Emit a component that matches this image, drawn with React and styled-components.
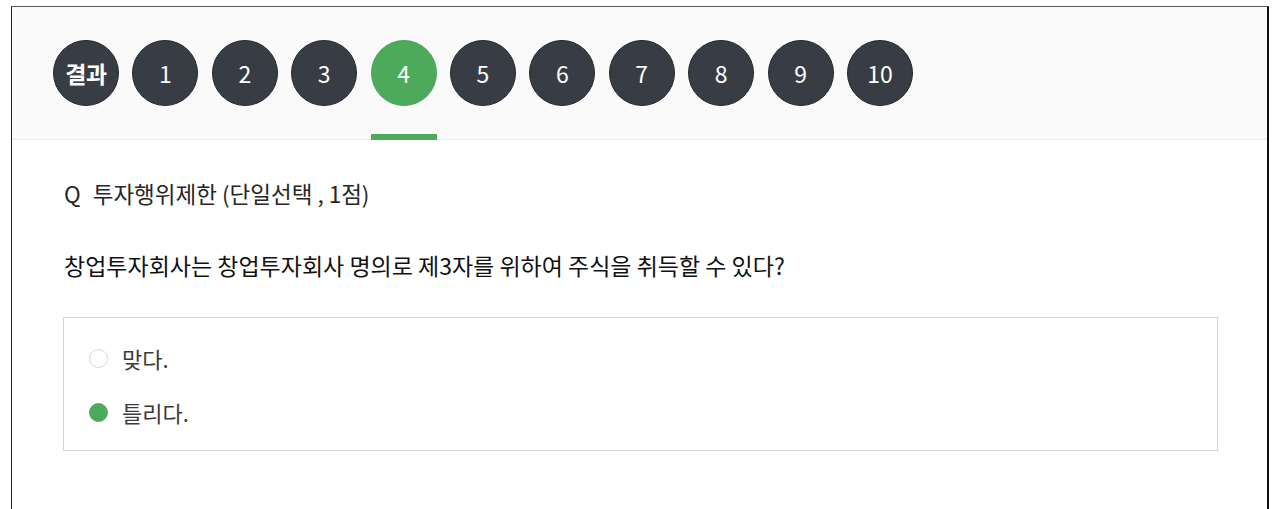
import React from "react";
import styled, { createGlobalStyle } from "styled-components";

const Global = createGlobalStyle`
  html, body { margin: 0; padding: 0; background: #ffffff; }
  body { font-family: "Noto Sans CJK KR", "Noto Sans", sans-serif; }
`;

const Page = styled.div`
  padding: 6px 11px 0 11px;
  height: 509px;
  box-sizing: border-box;
`;

const Frame = styled.div`
  border-top: 1px solid #555a60;
  border-left: 1px solid #222;
  border-right: 2px solid #111;
  height: 503px;
  box-sizing: border-box;
  overflow: hidden;
`;

const Header = styled.div`
  background: #fafafa;
  border-bottom: 1px solid #ececec;
  height: 133px;
  padding: 33px 0 0 41px;
  box-sizing: border-box;
  display: flex;
  gap: 13.4px;
  align-items: flex-start;
`;

const Tab = styled.div`
  position: relative;
  width: 66px;
  height: 100px;
  flex: 0 0 auto;
`;

const Circle = styled.div`
  width: 66px;
  height: 66px;
  border-radius: 50%;
  box-sizing: border-box;
  border: 1px solid ${(p) => (p.$active ? "#47a757" : "#25292e")};
  background: ${(p) => (p.$active ? "#4caa5a" : "#383d45")};
  color: #fff;
  display: flex;
  align-items: center;
  justify-content: center;
  font-size: 23px;
  font-weight: ${(p) => (p.$label ? 700 : 400)};
  font-family: "Noto Sans CJK KR", "Noto Sans", sans-serif;
  letter-spacing: ${(p) => (p.$label ? "-0.5px" : "0")};
`;

const Underline = styled.div`
  position: absolute;
  left: 0;
  bottom: 0;
  width: 66px;
  height: 6px;
  background: #4caa5a;
`;

const Body = styled.div`
  padding: 40px 49px 0 51px;
`;

const Title = styled.div`
  font-size: 22.5px;
  color: #262626;
  line-height: 26px;
  display: flex;
  gap: 12px;
  padding-left: 1px;
`;

const Question = styled.div`
  margin-top: 44px;
  padding-left: 1px;
  font-size: 23px;
  color: #111;
  line-height: 30px;
`;

const Options = styled.div`
  margin-top: 37px;
  border: 1px solid #d4d4d4;
  height: 134px;
  box-sizing: border-box;
  padding: 20px 25px 0;
  display: flex;
  flex-direction: column;
  gap: 14px;
`;

const Option = styled.label`
  display: flex;
  align-items: center;
  gap: 14px;
  height: 40px;
  font-size: 22px;
  color: #3a3a3a;
`;

const Radio = styled.span`
  width: 19px;
  height: 19px;
  border-radius: 50%;
  box-sizing: border-box;
  border: 1px solid ${(p) => (p.$checked ? "#4caa5a" : "#d8d8d8")};
  background: ${(p) => (p.$checked ? "#4caa5a" : "#fff")};
  flex: 0 0 auto;
`;

const tabs = ["결과", "1", "2", "3", "4", "5", "6", "7", "8", "9", "10"];

export default function App() {
  return (
    <>
      <Global />
      <Page>
        <Frame>
          <Header>
            {tabs.map((t, i) => (
              <Tab key={t}>
                <Circle $active={t === "4"} $label={i === 0}>
                  {t}
                </Circle>
                {t === "4" && <Underline />}
              </Tab>
            ))}
          </Header>
          <Body>
            <Title>
              <span>Q</span>
              <span>투자행위제한 (단일선택 , 1점)</span>
            </Title>
            <Question>
              창업투자회사는 창업투자회사 명의로 제3자를 위하여 주식을 취득할 수 있다?
            </Question>
            <Options>
              <Option>
                <Radio />
                <span>맞다.</span>
              </Option>
              <Option>
                <Radio $checked />
                <span>틀리다.</span>
              </Option>
            </Options>
          </Body>
        </Frame>
      </Page>
    </>
  );
}
